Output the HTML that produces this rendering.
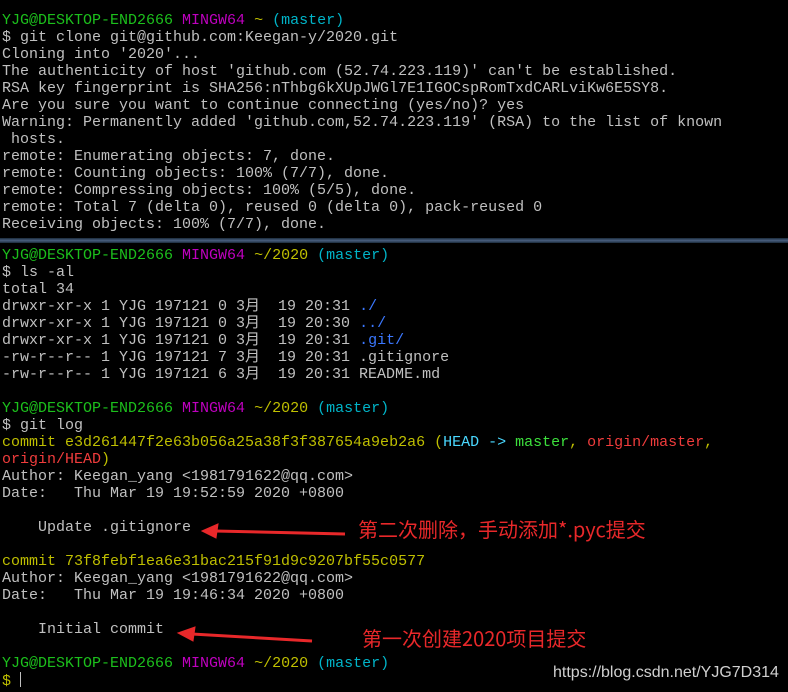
<!DOCTYPE html>
<html><head><meta charset="utf-8"><style>
html,body{margin:0;padding:0;background:#000;width:788px;height:692px;overflow:hidden;position:relative}
pre{position:absolute;left:2px;margin:0;font-family:"Liberation Mono","Noto Sans CJK SC",monospace;font-size:15px;line-height:17px;color:#c0c0c0;white-space:pre}
.g{color:#1cc01c}.m{color:#bf00bf}.y{color:#bfbf00}.c{color:#00b4c8}.b{color:#3b78ff}
.hc{color:#4ad8ff}.hg{color:#3ce03c}.r{color:#f03c3c}
.sep{position:absolute;left:0;top:238px;width:788px;height:5px;background:linear-gradient(#1a2a3a,#4a6080,#1a2a3a)}
.ann{position:absolute;font-family:"Noto Sans CJK SC","Liberation Sans",sans-serif;color:#e8282a;font-size:20px;line-height:22px}
.wm{position:absolute;left:553px;top:664px;font-family:"Liberation Sans",sans-serif;font-size:16px;color:#d0d0d0}
</style></head><body>
<pre style="top:12px"><span class="g">YJG@DESKTOP-END2666</span> <span class="m">MINGW64</span> <span class="y">~</span> <span class="c">(master)</span>
$ git clone git@github.com:Keegan-y/2020.git
Cloning into '2020'...
The authenticity of host 'github.com (52.74.223.119)' can't be established.
RSA key fingerprint is SHA256:nThbg6kXUpJWGl7E1IGOCspRomTxdCARLviKw6E5SY8.
Are you sure you want to continue connecting (yes/no)? yes
Warning: Permanently added 'github.com,52.74.223.119' (RSA) to the list of known
 hosts.
remote: Enumerating objects: 7, done.
remote: Counting objects: 100% (7/7), done.
remote: Compressing objects: 100% (5/5), done.
remote: Total 7 (delta 0), reused 0 (delta 0), pack-reused 0
Receiving objects: 100% (7/7), done.</pre>
<div class="sep"></div>
<pre style="top:247px"><span class="g">YJG@DESKTOP-END2666</span> <span class="m">MINGW64</span> <span class="y">~/2020</span> <span class="c">(master)</span>
$ ls -al
total 34
drwxr-xr-x 1 YJG 197121 0 3月  19 20:31 <span class="b">./</span>
drwxr-xr-x 1 YJG 197121 0 3月  19 20:30 <span class="b">../</span>
drwxr-xr-x 1 YJG 197121 0 3月  19 20:31 <span class="b">.git/</span>
-rw-r--r-- 1 YJG 197121 7 3月  19 20:31 .gitignore
-rw-r--r-- 1 YJG 197121 6 3月  19 20:31 README.md

<span class="g">YJG@DESKTOP-END2666</span> <span class="m">MINGW64</span> <span class="y">~/2020</span> <span class="c">(master)</span>
$ git log
<span class="y">commit e3d261447f2e63b056a25a38f3f387654a9eb2a6 (</span><span class="hc">HEAD -&gt; </span><span class="hg">master</span><span class="y">, </span><span class="r">origin/master</span><span class="y">,</span>
<span class="r">origin/HEAD</span><span class="y">)</span>
Author: Keegan_yang &lt;1981791622@qq.com&gt;
Date:   Thu Mar 19 19:52:59 2020 +0800

    Update .gitignore

<span class="y">commit 73f8febf1ea6e31bac215f91d9c9207bf55c0577</span>
Author: Keegan_yang &lt;1981791622@qq.com&gt;
Date:   Thu Mar 19 19:46:34 2020 +0800

    Initial commit

<span class="g">YJG@DESKTOP-END2666</span> <span class="m">MINGW64</span> <span class="y">~/2020</span> <span class="c">(master)</span>
<span class="y">$</span> <span style="display:inline-block;width:1px;height:15px;background:#c0c0c0;vertical-align:-2px"></span></pre>
<svg style="position:absolute;left:0;top:0" width="788" height="692">
<g stroke="#e8282a" fill="#e8282a">
<line x1="345" y1="534" x2="215" y2="531" stroke-width="3"/>
<polygon points="202,531 218,524 216,538"/>
<line x1="312" y1="641" x2="192" y2="634" stroke-width="3"/>
<polygon points="178,633 195,627 193,641"/>
</g></svg>
<div class="ann" style="left:358px;top:518px">第二次删除，手动添加*.pyc提交</div>
<div class="ann" style="left:362px;top:627px">第一次创建2020项目提交</div>
<div class="wm">https://blog.csdn.net/YJG7D314</div>
</body></html>
